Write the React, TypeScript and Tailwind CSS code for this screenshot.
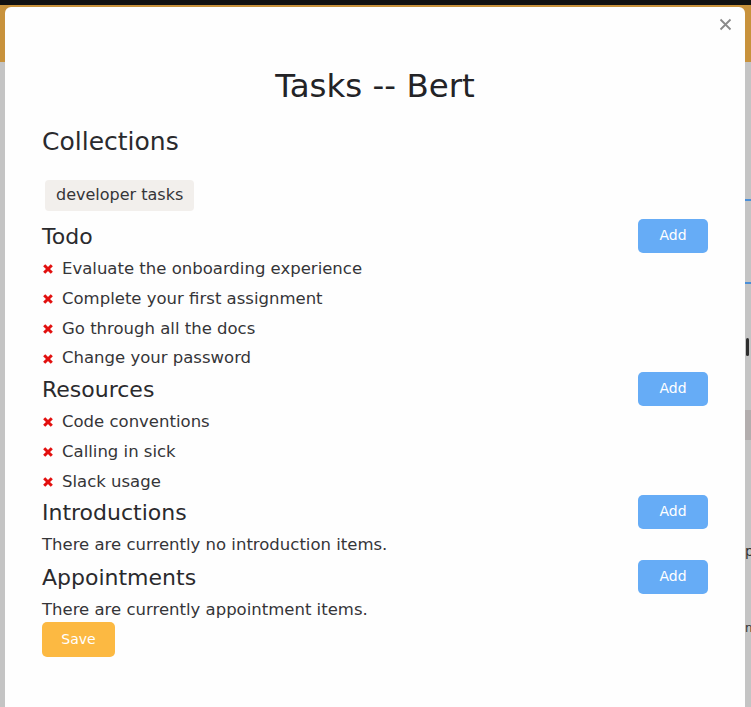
import React from 'react';

const font = { fontFamily: '"DejaVu Sans", sans-serif' };

function RemoveIcon() {
  return (
    <svg width="12" height="12" viewBox="0 0 12 12" className="shrink-0">
      <path d="M2.2 2.2L9.8 9.8M9.8 2.2L2.2 9.8" stroke="#e2100f" strokeWidth="3" strokeLinecap="butt" />
    </svg>
  );
}

function AddButton() {
  return (
    <button className="w-[70px] h-[34px] rounded-[5px] bg-[#66acf6] text-white text-[14px]">
      Add
    </button>
  );
}

interface SectionProps {
  title: string;
  items: string[];
  empty?: string;
}

function Section({ title, items, empty }: SectionProps) {
  return (
    <div className="flex flex-col">
      <div className="flex items-center justify-between h-[34px] pr-[37px]">
        <h3 className="text-[22px] text-[#2a2a2d] leading-none pt-[2px]">{title}</h3>
        <AddButton />
      </div>
      {items.map((item) => (
        <div key={item} className="flex items-center gap-[8px] h-[29.75px] pt-[4px] text-[16.5px] text-[#353538]">
          <RemoveIcon />
          <span>{item}</span>
        </div>
      ))}
      {empty && (
        <div className="flex items-center h-[31px] pt-[3px] text-[16.5px] text-[#353538]">{empty}</div>
      )}
    </div>
  );
}

export default function App() {
  return (
    <div className="relative w-[751px] h-[707px] bg-[#c4c4c4] overflow-hidden" style={font}>
      {/* page behind the dialog */}
      <div className="h-[5px] bg-[#111]" />
      <div className="h-[57px] bg-[#c8923c]" />
      <div className="flex justify-end">
        <div className="w-[6px] flex flex-col">
          <div className="h-[2px] mt-[137px] bg-[#4b8fd8]" />
          <div className="h-[2px] mt-[81px] bg-[#4b8fd8]" />
          <div className="h-[18px] w-[3px] ml-px mt-[54px] bg-[#2e2e2e] rounded-sm" />
          <div className="h-[30px] mt-[54px] bg-[#b3aeae]" />
          <div className="mt-[104px] text-[14px] leading-none text-[#333]">p</div>
          <div className="mt-[64px] text-[12px] leading-none text-[#333]">ne</div>
        </div>
      </div>

      {/* dialog */}
      <div className="absolute left-[5px] top-[7px] w-[740px] h-[720px] bg-[#fefefe] rounded-t-[6px]">
        <div className="flex justify-end pt-[11px] pr-[13px]">
          <svg width="13" height="13" viewBox="0 0 13 13">
            <path d="M1.5 1.5L11.5 11.5M11.5 1.5L1.5 11.5" stroke="#8a8a8a" strokeWidth="1.8" />
          </svg>
        </div>
        <h1 className="text-center text-[32.5px] text-[#232326] leading-none mt-[39px]">Tasks -- Bert</h1>
        <div className="pl-[37px] flex flex-col">
          <h2 className="text-[25px] text-[#2a2a2d] leading-none mt-[26px]">Collections</h2>
          <div className="mt-[26px] flex">
            <span className="ml-[3px] px-[11px] h-[31px] flex items-center rounded-[4px] bg-[#f2efec] text-[16px] text-[#353538]">
              developer tasks
            </span>
          </div>
          <div className="mt-[8px] flex flex-col">
            <Section
              title="Todo"
              items={[
                'Evaluate the onboarding experience',
                'Complete your first assignment',
                'Go through all the docs',
                'Change your password',
              ]}
            />
            <Section title="Resources" items={['Code conventions', 'Calling in sick', 'Slack usage']} />
            <Section title="Introductions" items={[]} empty="There are currently no introduction items." />
            <Section title="Appointments" items={[]} empty="There are currently appointment items." />
          </div>
          <div className="mt-[-3px]">
            <button className="w-[73px] h-[35px] rounded-[5px] bg-[#fcb942] text-white text-[14px]">
              Save
            </button>
          </div>
        </div>
      </div>
    </div>
  );
}
